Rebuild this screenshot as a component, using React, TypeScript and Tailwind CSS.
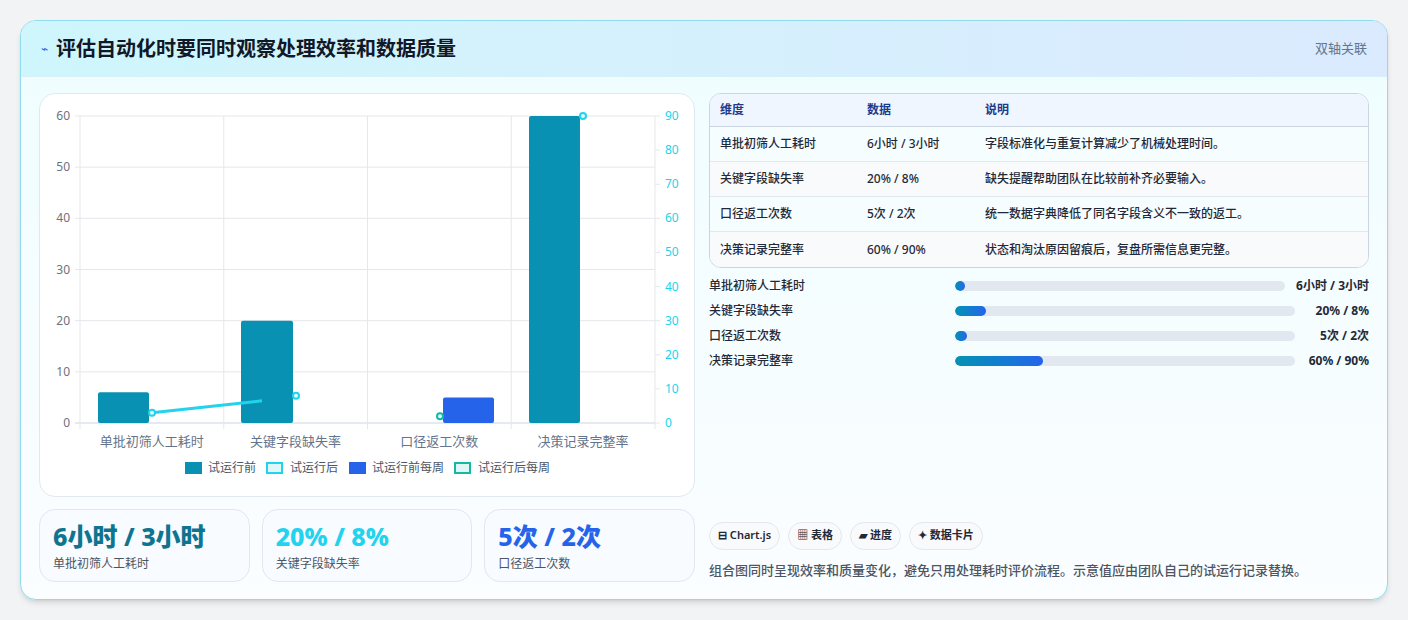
import React from "react";

const F = { fontFamily: '"Noto Sans","Noto Sans CJK SC",sans-serif' };

function Chart() {
  const L = 40, R = 615, T = 22, B = 329;
  const yl = (v: number) => B - (v / 60) * (B - T);
  const yr = (v: number) => B - (v / 90) * (B - T);
  const cats = ["单批初筛人工耗时", "关键字段缺失率", "口径返工次数", "决策记录完整率"];
  const cw = (R - L) / 4;
  return (
    <svg width="656" height="403" className="block" style={{ fontFamily: '"Noto Sans","Noto Sans CJK SC",sans-serif' }}>
      {[0, 10, 20, 30, 40, 50, 60].map((v) => (
        <g key={v}>
          <line x1={L - 5} x2={R} y1={yl(v)} y2={yl(v)} stroke={v === 0 ? "#cbd5e1" : "#e5e7eb"} />
          <text x={L - 10} y={yl(v) + 4} textAnchor="end" fontSize="12" fill="#6b7280">{v}</text>
        </g>
      ))}
      {[0, 10, 20, 30, 40, 50, 60, 70, 80, 90].map((v) => (
        <g key={v}>
          <line x1={R} x2={R + 5} y1={yr(v)} y2={yr(v)} stroke="#e5e7eb" />
          <text x={R + 10} y={yr(v) + 4} fontSize="12" fill="#22d3ee">{v}</text>
        </g>
      ))}
      {[0, 1, 2, 3, 4].map((i) => (
        <line key={i} x1={L + i * cw} x2={L + i * cw} y1={T} y2={B + 6} stroke="#e5e7eb" />
      ))}
      <rect x={58} y={yl(6)} width={51} height={B - yl(6)} rx="2" fill="#0891b2" />
      <rect x={201} y={yl(20)} width={52} height={B - yl(20)} rx="2" fill="#0891b2" />
      <rect x={403} y={yl(5)} width={51} height={B - yl(5)} rx="2" fill="#2563eb" />
      <rect x={489} y={yl(60)} width={51} height={B - yl(60)} rx="2" fill="#0891b2" />
      <line x1={112} y1={yr(3)} x2={222} y2={yr(6.5)} stroke="#22d3ee" strokeWidth="3" />
      <circle cx={112} cy={yr(3)} r="3" fill="#e0f7fa" stroke="#22d3ee" strokeWidth="2" />
      <circle cx={256} cy={yr(8)} r="3" fill="#e0f7fa" stroke="#22d3ee" strokeWidth="2" />
      <circle cx={400} cy={yr(2)} r="3" fill="#e0f7fa" stroke="#14b8a6" strokeWidth="2" />
      <circle cx={543} cy={yr(90)} r="3" fill="#e0f7fa" stroke="#22d3ee" strokeWidth="2" />
      {cats.map((c, i) => (
        <text key={c} x={L + i * cw + cw / 2} y={352} textAnchor="middle" fontSize="13" fill="#64748b">{c}</text>
      ))}
      <g fontSize="12" fill="#4b5563">
        <rect x={145} y={368} width={17} height={12} fill="#0891b2" />
        <text x={168} y={378}>试运行前</text>
        <rect x={227} y={369} width={15} height={10} fill="#e0f7fa" stroke="#22d3ee" strokeWidth="2" />
        <text x={250} y={378}>试运行后</text>
        <rect x={309} y={368} width={17} height={12} fill="#2563eb" />
        <text x={332} y={378}>试运行前每周</text>
        <rect x={415} y={369} width={15} height={10} fill="#e0f7f4" stroke="#14b8a6" strokeWidth="2" />
        <text x={438} y={378}>试运行后每周</text>
      </g>
    </svg>
  );
}

const rows = [
  ["单批初筛人工耗时", "6小时 / 3小时", "字段标准化与重复计算减少了机械处理时间。"],
  ["关键字段缺失率", "20% / 8%", "缺失提醒帮助团队在比较前补齐必要输入。"],
  ["口径返工次数", "5次 / 2次", "统一数据字典降低了同名字段含义不一致的返工。"],
  ["决策记录完整率", "60% / 90%", "状态和淘汰原因留痕后，复盘所需信息更完整。"],
];

const bars: [string, number, string, string][] = [
  ["单批初筛人工耗时", 3, "6小时 / 3小时", "w-[330px]"],
  ["关键字段缺失率", 9, "20% / 8%", "w-[340px]"],
  ["口径返工次数", 3.5, "5次 / 2次", "w-[340px]"],
  ["决策记录完整率", 26, "60% / 90%", "w-[340px]"],
];

export default function App() {
  return (
    <div className="w-[1408px] h-[620px] bg-[#f1f3f5] pt-5 px-5" style={F}>
      <div className="w-[1368px] h-[580px] rounded-2xl border border-[#8fdcec] overflow-hidden bg-gradient-to-b from-[#effdff] to-[#fbfdff] shadow-md flex flex-col">
        <div className="h-[56px] shrink-0 flex items-center justify-between px-5 bg-gradient-to-r from-[#cff6fc] to-[#dbeafe] border-b border-[#d6f2f8]">
          <div className="flex items-center gap-2">
            <span className="text-[#2563eb] text-[12px]">⌁</span>
            <span className="text-[20px] font-bold text-[#111827]">评估自动化时要同时观察处理效率和数据质量</span>
          </div>
          <span className="text-[13px] text-[#64748b]">双轴关联</span>
        </div>
        <div className="flex gap-[14px] pl-[18px] pr-[18px] pt-4 flex-1">
          <div className="w-[656px] flex flex-col gap-3">
            <div className="h-[404px] rounded-2xl border border-[#e2e8f0] bg-white"><Chart /></div>
            <div className="grid grid-cols-3 gap-3">
              {[["6小时 / 3小时", "text-[#0e7490]", "单批初筛人工耗时"], ["20% / 8%", "text-[#22d3ee]", "关键字段缺失率"], ["5次 / 2次", "text-[#2563eb]", "口径返工次数"]].map(([v, c, l]) => (
                <div key={l} className="h-[73px] rounded-2xl border border-[#e2e8f0] bg-[#f8fbff] px-[13px] pt-[9px]">
                  <div className={`text-[25px] font-extrabold leading-[34px] ${c}`}>{v}</div>
                  <div className="text-[12px] text-[#4b5563] mt-[2px]">{l}</div>
                </div>
              ))}
            </div>
          </div>
          <div className="flex-1 flex flex-col">
            <div className="rounded-xl border border-[#cbd5e1] overflow-hidden bg-white">
              <div className="flex h-[33px] items-center bg-[#eff6ff] border-b border-[#cbd5e1] text-[12px] font-semibold text-[#1e3a8a]">
                <div className="w-[157px] pl-[10px]">维度</div><div className="w-[118px]">数据</div><div>说明</div>
              </div>
              {rows.map((r, i) => (
                <div key={r[0]} className={`flex h-[35px] items-center text-[12px] font-medium text-[#1f2937] ${i < 3 ? "border-b border-[#e2e8f0]" : ""} ${i % 2 ? "bg-[#f8fafc]" : "bg-[#f5fdff]"}`}>
                  <div className="w-[157px] pl-[10px]">{r[0]}</div><div className="w-[118px]">{r[1]}</div><div>{r[2]}</div>
                </div>
              ))}
            </div>
            <div className="mt-[9px] flex flex-col gap-[7px]">
              {bars.map(([l, p, v, w]) => (
                <div key={l} className="flex items-center h-[18px] text-[12px]">
                  <div className="w-[246px] font-medium text-[#1f2937]">{l}</div>
                  <div className={`${w} h-[10px] rounded-full bg-[#e2e8f0] overflow-hidden`}>
                    <div className="h-full rounded-full bg-gradient-to-r from-[#0891b2] to-[#2563eb]" style={{ width: `${p}%`, minWidth: 10 }} />
                  </div>
                  <div className="flex-1 text-right font-bold text-[#1f2937]">{v}</div>
                </div>
              ))}
            </div>
            <div className="mt-auto pb-[19px]">
              <div className="flex gap-2 text-[11px] font-semibold text-[#1f2937]">
                {["⊟ Chart.js", "▦ 表格", "▰ 进度", "✦ 数据卡片"].map((t) => (
                  <span key={t} className="h-[28px] px-[8px] rounded-full border border-[#e5e7eb] bg-[#f8fafc] flex items-center">{t}</span>
                ))}
              </div>
              <div className="mt-[11px] text-[13px] font-medium text-[#4b5563]">组合图同时呈现效率和质量变化，避免只用处理耗时评价流程。示意值应由团队自己的试运行记录替换。</div>
            </div>
          </div>
        </div>
      </div>
    </div>
  );
}
